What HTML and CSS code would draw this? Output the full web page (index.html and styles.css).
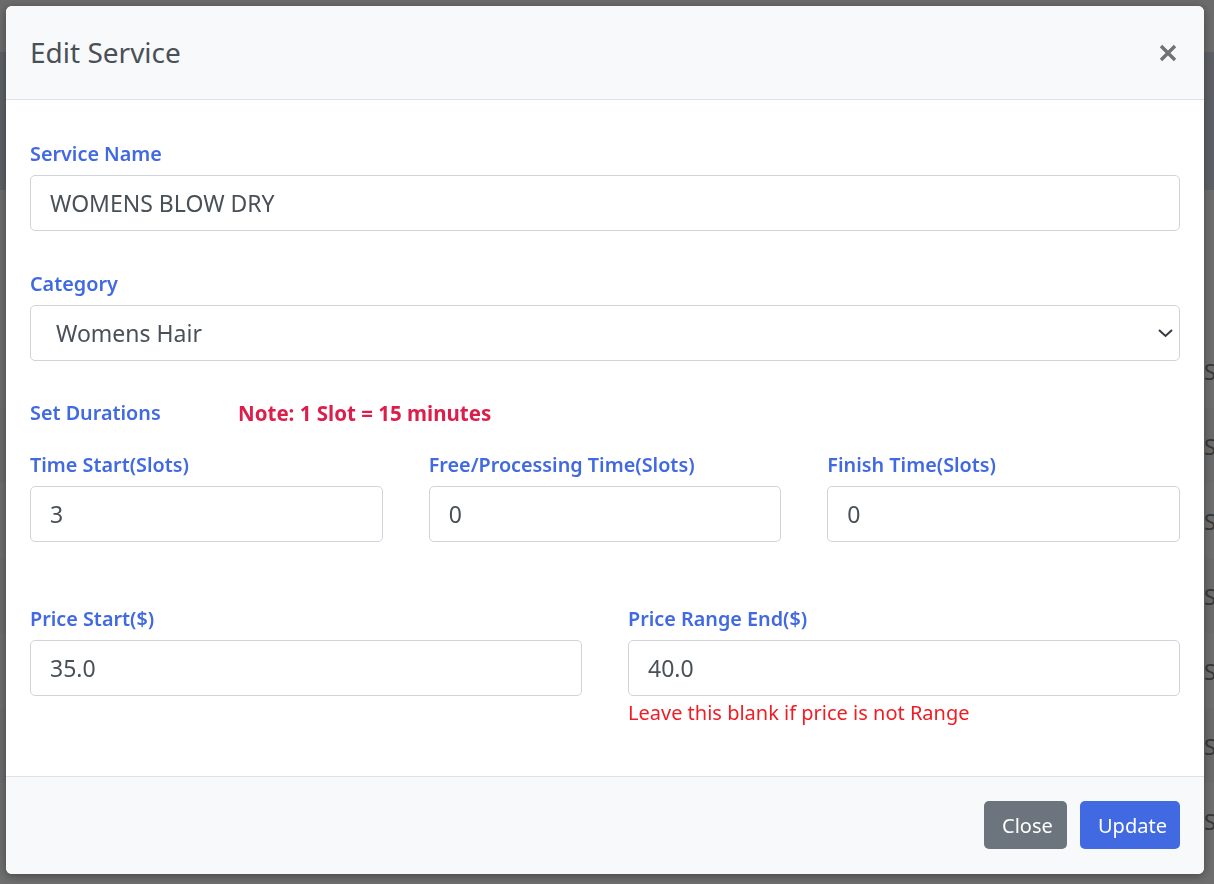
FILE: index.html
```html
<!DOCTYPE html>
<html lang="en">
<head>
<meta charset="utf-8">
<title>Edit Service</title>
<link rel="stylesheet" href="styles.css">
</head>
<body>
<div class="page">
  <div class="page-top"></div>
  <div class="page-band"></div>
  <div class="page-spacer"></div>
  <div class="page-rows">
    <div class="page-row">S</div>
    <div class="page-row alt">S</div>
    <div class="page-row">S</div>
    <div class="page-row alt">S</div>
    <div class="page-row">S</div>
    <div class="page-row alt">S</div>
    <div class="page-row">S</div>
  </div>
</div>
<div class="backdrop"></div>
<div class="overlay">
  <div class="modal">
    <div class="modal-header">
      <h5 class="modal-title">Edit Service</h5>
      <button class="btn-x" type="button" aria-label="Close">
        <svg width="18" height="18" viewBox="0 0 18 18"><path d="M2 2 L16 16 M16 2 L2 16" stroke="#717273" stroke-width="3.4" stroke-linecap="butt"/></svg>
      </button>
    </div>
    <div class="modal-body">
      <div class="group">
        <label class="lbl">Service Name</label>
        <div class="field">WOMENS BLOW DRY</div>
      </div>
      <div class="group">
        <label class="lbl">Category</label>
        <div class="field select"><span>Womens Hair</span>
          <svg width="15" height="10" viewBox="0 0 15 10"><path d="M1 2 L7.5 8 L14 2" fill="none" stroke="#343a40" stroke-width="2"/></svg>
        </div>
      </div>
      <div class="dur-head">
        <span class="lbl">Set Durations</span>
        <span class="note">Note: 1 Slot = 15 minutes</span>
      </div>
      <div class="grid3">
        <div>
          <label class="lbl">Time Start(Slots)</label>
          <div class="field">3</div>
        </div>
        <div>
          <label class="lbl">Free/Processing Time(Slots)</label>
          <div class="field">0</div>
        </div>
        <div>
          <label class="lbl">Finish Time(Slots)</label>
          <div class="field">0</div>
        </div>
      </div>
      <div class="grid2">
        <div>
          <label class="lbl">Price Start($)</label>
          <div class="field">35.0</div>
        </div>
        <div>
          <label class="lbl">Price Range End($)</label>
          <div class="field">40.0</div>
          <div class="help">Leave this blank if price is not Range</div>
        </div>
      </div>
    </div>
    <div class="modal-footer">
      <button class="btn btn-close" type="button">Close</button>
      <button class="btn btn-update" type="button">Update</button>
    </div>
  </div>
</div>
</body>
</html>
```

FILE: styles.css
```css
* { box-sizing: border-box; }
html, body { margin: 0; padding: 0; }
body {
  width: 1214px;
  height: 884px;
  overflow: hidden;
  font-family: "Noto Sans", "Open Sans", sans-serif;
  background: #dcdcdc;
}
.page { display: flex; flex-direction: column; height: 884px; }
.page-top { height: 52px; background: #d6d6d6; }
.page-band { height: 138px; background: #b8c0cc; }
.page-spacer { height: 143px; background: #dadada; }
.page-rows { display: flex; flex-direction: column; }
.page-row {
  height: 75px;
  display: flex;
  align-items: center;
  padding-left: 1204px;
  font-size: 22px;
  color: #6e6e6e;
  background: #dadada;
}
.page-row.alt { background: #d4d4d4; }

.backdrop {
  position: fixed;
  inset: 0;
  background: rgba(0, 0, 0, 0.5);
}
.overlay {
  position: fixed;
  inset: 0;
  padding: 6px 10px 10px 6px;
}
.modal {
  width: 1198px;
  height: 868px;
  background: #fff;
  border-radius: 6px;
  display: flex;
  flex-direction: column;
  overflow: hidden;
  box-shadow: 0 2px 8px rgba(0, 0, 0, 0.35);
}
.modal-header {
  height: 94px;
  flex: none;
  background: #f8f9fa;
  border-bottom: 1px solid #dee2e6;
  display: flex;
  align-items: center;
  justify-content: space-between;
  padding: 0 27px 0 24px;
}
.modal-title {
  margin: 0;
  font-size: 28px;
  font-weight: 400;
  color: #495057;
  line-height: 1;
  padding-bottom: 1px;
}
.btn-x {
  border: 0;
  background: transparent;
  padding: 0;
  width: 18px;
  height: 18px;
  display: flex;
}
.modal-body {
  flex: 1;
  padding: 41px 24px 0 24px;
}
.lbl {
  display: block;
  font-size: 19.8px;
  font-weight: 600;
  color: #4169e1;
  line-height: 26px;
  margin-bottom: 8px;
}
.group { margin-bottom: 40px; }
.field {
  height: 56px;
  border: 1px solid #ced4da;
  border-radius: 5px;
  padding: 0 19px;
  display: flex;
  align-items: center;
  font-size: 23px;
  color: #495057;
  background: #fff;
}
.field.select {
  padding: 0 6px 0 25px;
  justify-content: space-between;
}
.dur-head {
  display: flex;
  align-items: center;
  margin-top: -1px;
  margin-bottom: 26px;
}
.dur-head .lbl { margin: 0; width: 208px; }
.note {
  font-size: 20.5px;
  font-weight: 700;
  color: #dc1e4b;
  line-height: 26px;
}
.grid3 {
  display: grid;
  grid-template-columns: 1fr 1fr 1fr;
  column-gap: 46px;
  margin-bottom: 64px;
}
.grid2 {
  display: grid;
  grid-template-columns: 1fr 1fr;
  column-gap: 46px;
}
.help {
  margin-top: 4px;
  font-size: 20px;
  line-height: 26px;
  color: #f21c24;
}
.modal-footer {
  flex: none;
  height: 98px;
  background: #f8f9fa;
  border-top: 1px solid #dee2e6;
  display: flex;
  justify-content: flex-end;
  align-items: flex-start;
  gap: 13px;
  padding: 24px 24px 0 24px;
}
.btn {
  height: 48px;
  border: 0;
  border-radius: 5px;
  font-family: inherit;
  font-size: 20px;
  color: #fff;
  padding: 0 18px;
}
.btn-close { background: #6c757d; width: 83px; }
.btn-update { background: #4169e1; width: 100px; }
```
